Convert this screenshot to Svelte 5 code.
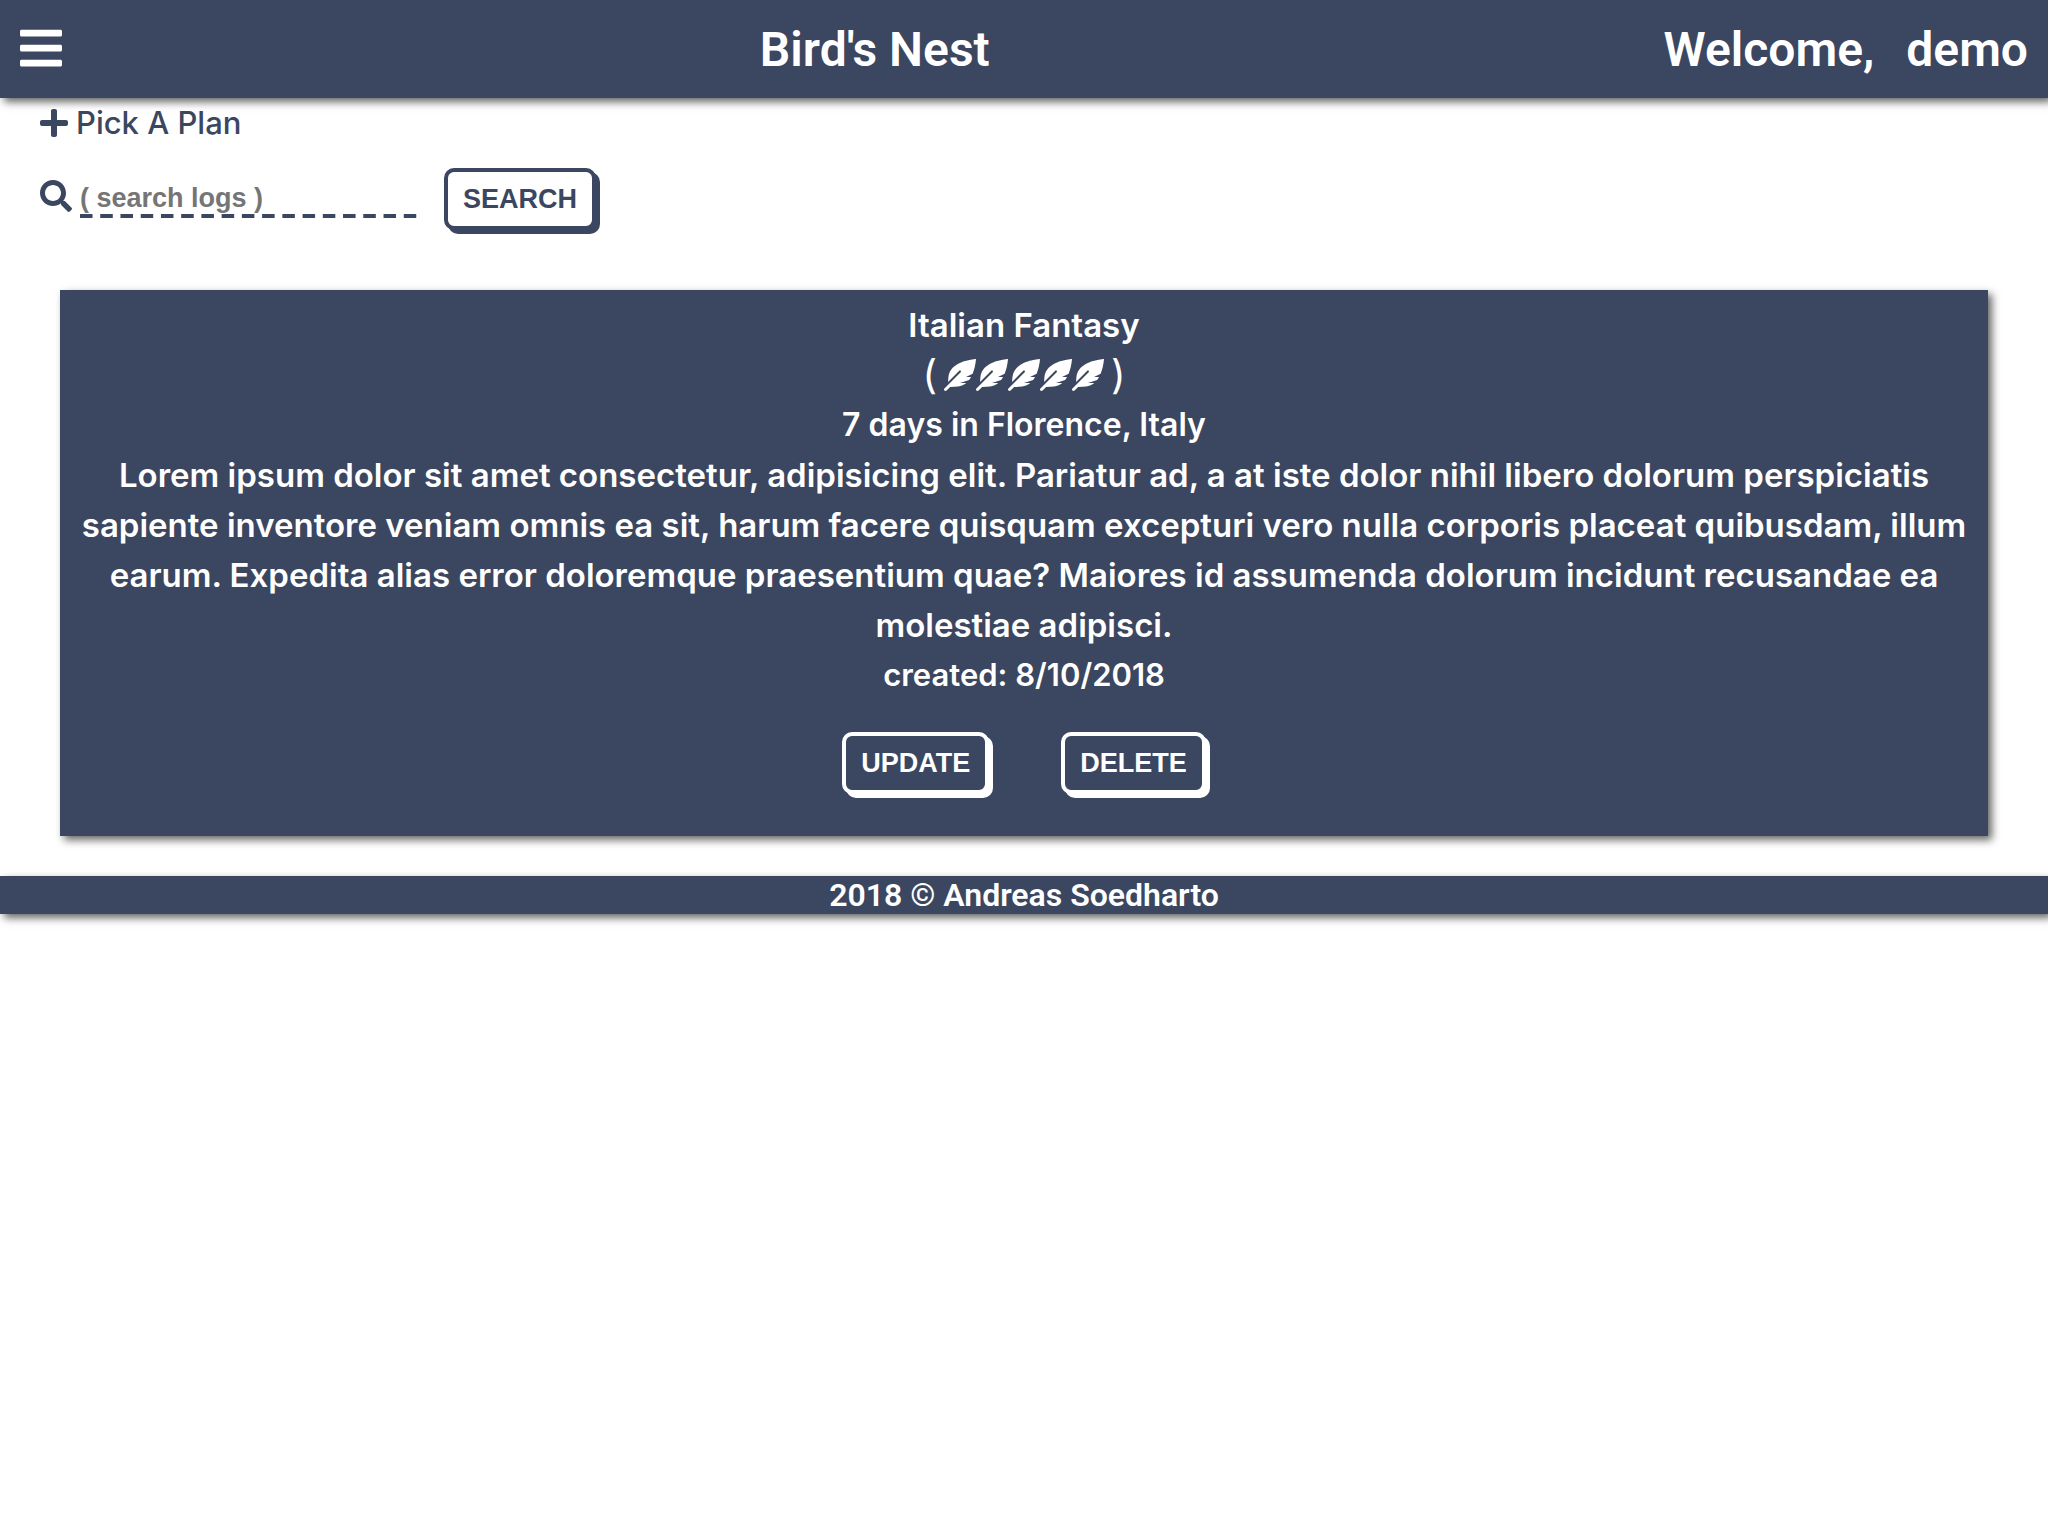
<script>
  let query = $state('');
  const log = {
    title: 'Italian Fantasy',
    rating: 5,
    trip: '7 days in Florence, Italy',
    text: 'Lorem ipsum dolor sit amet consectetur, adipisicing elit. Pariatur ad, a at iste dolor nihil libero dolorum perspiciatis sapiente inventore veniam omnis ea sit, harum facere quisquam excepturi vero nulla corporis placeat quibusdam, illum earum. Expedita alias error doloremque praesentium quae? Maiores id assumenda dolorum incidunt recusandae ea molestiae adipisci.',
    created: '8/10/2018'
  };
</script>

<header>
  <button class="menu" aria-label="Menu">
    <svg viewBox="0 0 448 512" width="42" height="48"><path d="M16 132h416c8.837 0 16-7.163 16-16V76c0-8.837-7.163-16-16-16H16C7.163 60 0 67.163 0 76v40c0 8.837 7.163 16 16 16zm0 160h416c8.837 0 16-7.163 16-16v-40c0-8.837-7.163-16-16-16H16c-8.837 0-16 7.163-16 16v40c0 8.837 7.163 16 16 16zm0 160h416c8.837 0 16-7.163 16-16v-40c0-8.837-7.163-16-16-16H16c-8.837 0-16 7.163-16 16v40c0 8.837 7.163 16 16 16z"/></svg>
  </button>
  <h1>Bird's Nest</h1>
  <p class="welcome"><span>Welcome,</span><span>demo</span></p>
</header>

<main>
  <a class="plan" href="#plan">
    <svg viewBox="0 0 448 512" width="28" height="32"><path d="M416 208H272V64c0-17.67-14.33-32-32-32h-32c-17.67 0-32 14.33-32 32v144H32c-17.67 0-32 14.33-32 32v32c0 17.67 14.33 32 32 32h144v144c0 17.67 14.33 32 32 32h32c17.67 0 32-14.33 32-32V304h144c17.67 0 32-14.33 32-32v-32c0-17.67-14.33-32-32-32z"/></svg>
    <span>Pick A Plan</span>
  </a>
  <form onsubmit={(e) => e.preventDefault()}>
    <label for="query" aria-label="Search logs">
      <svg viewBox="0 0 512 512" width="32" height="32"><path d="M505 442.7L405.3 343c-4.500-4.500-10.600-7-17-7H372c27.600-35.300 44-79.700 44-128C416 93.100 322.900 0 208 0S0 93.100 0 208s93.100 208 208 208c48.300 0 92.700-16.400 128-44v16.300c0 6.400 2.500 12.500 7 17l99.700 99.700c9.400 9.400 24.600 9.400 33.900 0l28.300-28.300c9.400-9.400 9.400-24.600.1-34zM208 336c-70.700 0-128-57.200-128-128 0-70.700 57.200-128 128-128 70.700 0 128 57.200 128 128 0 70.700-57.200 128-128 128z"/></svg>
    </label>
    <input id="query" type="text" placeholder="( search logs )" bind:value={query} />
    <button class="btn">SEARCH</button>
  </form>

  <article>
    <h2>{log.title}</h2>
    <p class="rating" aria-label="Rating {log.rating} of 5">
      <span class="paren">(</span>
      <span class="feathers">
        {#each Array(log.rating) as _}
          <svg viewBox="0 0 512 512" width="32" height="32"><path d="M512 0C460.22 3.56 96.44 38.2 71.01 287.61c-3.09 26.66-4.84 53.44-5.99 80.24l178.87-178.69c6.25-6.25 16.4-6.25 22.65 0s6.25 16.38 0 22.63L7.04 471.03c-9.38 9.37-9.38 24.57 0 33.94 9.38 9.37 24.59 9.37 33.98 0l57.13-57.07c42.09-.14 84.15-2.53 125.96-7.36 53.48-5.44 97.02-26.47 132.58-56.54H255.74l146.79-48.88c11.25-14.89 21.37-30.71 30.45-47.12h-81.14l106.54-53.21C500.29 132.86 510.19 26.26 512 0z"/></svg>
        {/each}
      </span>
      <span class="paren">)</span>
    </p>
    <p>{log.trip}</p>
    <p class="text">{log.text}</p>
    <p class="created">created: {log.created}</p>
    <div class="actions">
      <button class="btn light">UPDATE</button>
      <button class="btn light">DELETE</button>
    </div>
  </article>
</main>

<footer>2018 © Andreas Soedharto</footer>

<style>
  :global(body) {
    min-height: 100vh;
    background: #fff;
  }
  svg {
    display: block;
    fill: currentColor;
  }
  h1, h2, p {
    margin: 0;
    font: inherit;
  }
  header {
    display: flex;
    align-items: center;
    justify-content: space-between;
    padding: 22px 20px 20px;
    background: #3b4660;
    color: #fff;
    box-shadow: 4px 4px 8px rgba(0, 0, 0, 0.6);
    font: 600 48px/56px Roboto, sans-serif;
  }
  .menu {
    margin-bottom: 4px;
    padding: 0 24px 0 0;
    border: 0;
    background: none;
    color: inherit;
  }
  .welcome {
    display: flex;
    gap: 32px;
  }
  main {
    color: #3b4660;
    font: 600 32px/50px Inter, sans-serif;
  }
  .plan {
    display: flex;
    align-items: center;
    gap: 8px;
    width: fit-content;
    margin-left: 40px;
    color: inherit;
    font-size: 31px;
    font-weight: 500;
    text-decoration: none;
  }
  form {
    display: flex;
    margin: 20px 40px 60px;
  }
  label {
    margin: 12px 8px 0 0;
  }
  input {
    box-sizing: border-box;
    width: 344px;
    height: 40px;
    margin: 10px 20px 0 0;
    padding: 5px 0 4px;
    border: 0;
    background: linear-gradient(90deg, #3b4660 60%, transparent 60%) left bottom / 20px 4px round no-repeat;
    color: inherit;
    font: bold 27px/30px "Liberation Sans", Arial, sans-serif;
  }
  input::placeholder {
    color: #757575;
    opacity: 1;
  }
  .btn {
    padding: 12px 15px;
    border: 4px solid #3b4660;
    border-radius: 10px;
    background: #fff;
    box-shadow: 4px 4px 0 #3b4660;
    color: #3b4660;
    font: bold 27px/30px "Liberation Sans", Arial, sans-serif;
  }
  .light {
    border-color: #fff;
    background: #3b4660;
    box-shadow: 4px 4px 0 #fff;
    color: #fff;
  }
  article {
    margin: 0 60px 40px;
    padding: 10px 10px 42px;
    background: #3b4660;
    box-shadow: 4px 4px 8px rgba(0, 0, 0, 0.6);
    color: #fff;
    text-align: center;
  }
  h2, .text {
    font-size: 33px;
  }
  .created {
    font-size: 31px;
  }
  .rating {
    display: flex;
    justify-content: center;
    align-items: center;
    gap: 7px;
  }
  .paren {
    font-size: 40px;
    font-weight: 400;
  }
  .feathers {
    display: flex;
  }
  .actions {
    display: flex;
    justify-content: center;
    gap: 72px;
    margin-top: 32px;
  }
  footer {
    background: #3b4660;
    box-shadow: 4px 4px 8px rgba(0, 0, 0, 0.6);
    color: #fff;
    font: 600 32px/38px Roboto, sans-serif;
    text-align: center;
  }
</style>
